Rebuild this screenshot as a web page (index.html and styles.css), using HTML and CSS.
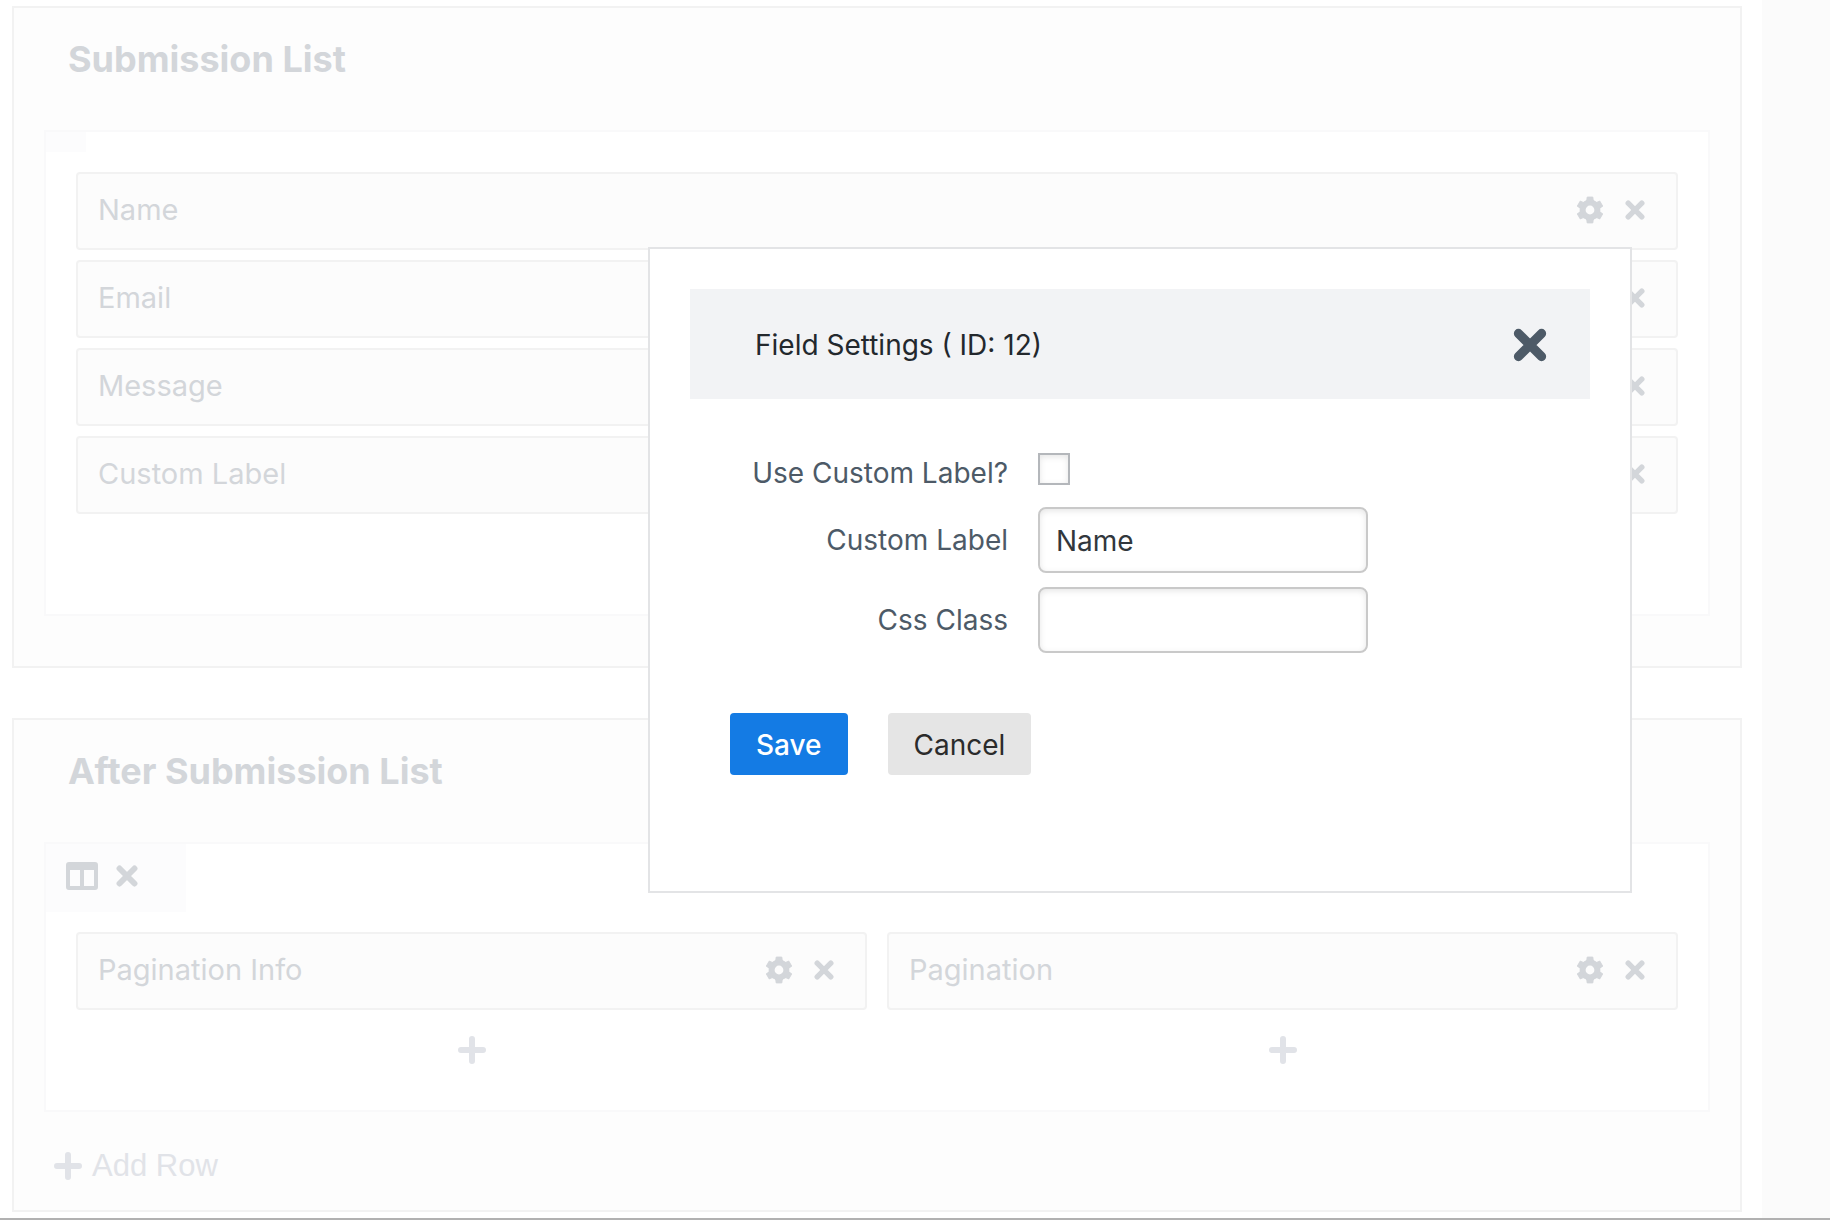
FILE: index.html
```html
<!DOCTYPE html>
<html lang="en">
<head>
    <meta charset="UTF-8">
    <meta name="viewport" content="width=device-width, initial-scale=1.0">
    <title>List Layout Builder</title>
    <link rel="stylesheet" href="styles.css">
</head>
<body>
    <!-- Shared icons -->
    <svg class="sprite" aria-hidden="true">
        <symbol id="icon-close" viewBox="0 0 20 20">
            <path d="M3.2 3.2 16.8 16.8M16.8 3.2 3.2 16.8" fill="none" stroke="currentColor" stroke-width="5.4" stroke-linecap="round"/>
        </symbol>
        <symbol id="icon-gear" viewBox="0 0 28 28">
            <circle cx="14" cy="14" r="7.4" fill="none" stroke="currentColor" stroke-width="6"/>
            <g fill="currentColor" stroke="currentColor" stroke-width="1" stroke-linejoin="round">
                <path id="tooth" d="M8.8 6.2 10.8 4.5 11.2 1.1H16.8L17.2 4.5 19.2 6.2Z"/>
                <use href="#tooth" transform="rotate(60 14 14)"/>
                <use href="#tooth" transform="rotate(120 14 14)"/>
                <use href="#tooth" transform="rotate(180 14 14)"/>
                <use href="#tooth" transform="rotate(240 14 14)"/>
                <use href="#tooth" transform="rotate(300 14 14)"/>
            </g>
        </symbol>
        <symbol id="icon-plus" viewBox="0 0 28 28">
            <path d="M14 3v22M3 14h22" fill="none" stroke="currentColor" stroke-width="6" stroke-linecap="round"/>
        </symbol>
        <symbol id="icon-columns" viewBox="0 0 32 28">
            <path fill="currentColor" fill-rule="evenodd" d="M3 0h26a3 3 0 0 1 3 3v22a3 3 0 0 1-3 3H3a3 3 0 0 1-3-3V3a3 3 0 0 1 3-3ZM4 8v16h10V8ZM18 8v16h10V8Z"/>
        </symbol>
    </svg>

    <div class="page">
        <main class="builder">
            <section class="panel">
                <h2>Submission List</h2>
                <div class="row">
                    <div class="row-handle"></div>
                    <div class="columns">
                        <div class="column">
                            <div class="field">
                                <span>Name</span>
                                <button type="button" aria-label="Settings"><svg class="gear"><use href="#icon-gear"/></svg></button>
                                <button type="button" aria-label="Remove"><svg class="remove"><use href="#icon-close"/></svg></button>
                            </div>
                            <div class="field">
                                <span>Email</span>
                                <button type="button" aria-label="Settings"><svg class="gear"><use href="#icon-gear"/></svg></button>
                                <button type="button" aria-label="Remove"><svg class="remove"><use href="#icon-close"/></svg></button>
                            </div>
                            <div class="field">
                                <span>Message</span>
                                <button type="button" aria-label="Settings"><svg class="gear"><use href="#icon-gear"/></svg></button>
                                <button type="button" aria-label="Remove"><svg class="remove"><use href="#icon-close"/></svg></button>
                            </div>
                            <div class="field">
                                <span>Custom Label</span>
                                <button type="button" aria-label="Settings"><svg class="gear"><use href="#icon-gear"/></svg></button>
                                <button type="button" aria-label="Remove"><svg class="remove"><use href="#icon-close"/></svg></button>
                            </div>
                            <button type="button" class="add-field" aria-label="Add field"><svg class="plus"><use href="#icon-plus"/></svg></button>
                        </div>
                    </div>
                </div>
            </section>

            <section class="panel">
                <h2>After Submission List</h2>
                <div class="row">
                    <div class="row-handle">
                        <div class="row-tools">
                            <button type="button" aria-label="Columns"><svg class="cols"><use href="#icon-columns"/></svg></button>
                            <button type="button" aria-label="Remove row"><svg class="remove-row"><use href="#icon-close"/></svg></button>
                        </div>
                    </div>
                    <div class="columns">
                        <div class="column">
                            <div class="field">
                                <span>Pagination Info</span>
                                <button type="button" aria-label="Settings"><svg class="gear"><use href="#icon-gear"/></svg></button>
                                <button type="button" aria-label="Remove"><svg class="remove"><use href="#icon-close"/></svg></button>
                            </div>
                            <button type="button" class="add-field" aria-label="Add field"><svg class="plus"><use href="#icon-plus"/></svg></button>
                        </div>
                        <div class="column">
                            <div class="field">
                                <span>Pagination</span>
                                <button type="button" aria-label="Settings"><svg class="gear"><use href="#icon-gear"/></svg></button>
                                <button type="button" aria-label="Remove"><svg class="remove"><use href="#icon-close"/></svg></button>
                            </div>
                            <button type="button" class="add-field" aria-label="Add field"><svg class="plus"><use href="#icon-plus"/></svg></button>
                        </div>
                    </div>
                </div>
                <button type="button" class="add-row"><svg class="plus"><use href="#icon-plus"/></svg>Add Row</button>
            </section>
        </main>
        <aside class="sidebar"></aside>
    </div>

    <div class="modal" role="dialog" aria-labelledby="modalTitle">
        <div class="modal-header">
            <h3 id="modalTitle">Field Settings ( ID: 12)</h3>
            <button type="button" aria-label="Close"><svg class="close"><use href="#icon-close"/></svg></button>
        </div>
        <form>
            <div class="form-row form-row-check">
                <label for="useCustomLabel">Use Custom Label?</label>
                <input type="checkbox" id="useCustomLabel">
            </div>
            <div class="form-row">
                <label for="customLabel">Custom Label</label>
                <input type="text" id="customLabel" value="Name">
            </div>
            <div class="form-row">
                <label for="cssClass">Css Class</label>
                <input type="text" id="cssClass">
            </div>
            <div class="form-actions">
                <button type="button" class="btn btn-primary">Save</button>
                <button type="button" class="btn">Cancel</button>
            </div>
        </form>
    </div>
</body>
</html>
```
FILE: styles.css
```css
* {
    box-sizing: border-box;
}

body {
    margin: 0;
    background: #fff;
    color: #d3d6da;
    font-family: Inter, "Liberation Sans", sans-serif;
    font-size: 28px;
}

h2, h3 {
    margin: 0;
}

button {
    background: none;
    border: none;
    padding: 0;
    color: inherit;
    font-family: inherit;
    font-size: inherit;
    cursor: pointer;
}

svg {
    display: block;
}

.sprite {
    position: absolute;
    width: 0;
    height: 0;
}

.gear, .plus {
    width: 28px;
    height: 28px;
}

.remove {
    width: 20px;
    height: 20px;
}

.remove-row {
    width: 22px;
    height: 22px;
}

.cols {
    width: 32px;
    height: 28px;
}

.close {
    width: 34px;
    height: 34px;
}

/* Builder */
.page {
    display: flex;
    border-bottom: 2px solid #b1b1b1;
}

.builder {
    flex: 1;
    display: flex;
    flex-direction: column;
    gap: 50px;
    padding: 6px 20px 6px 12px;
}

.sidebar {
    width: 68px;
    background: #fbfbfb;
}

.panel {
    background: #fdfdfd;
    border: 2px solid #f2f2f2;
    padding: 28px 30px 16px;
}

.panel h2 {
    margin-bottom: 48px;
    padding: 0 24px;
    font-size: 36px;
    line-height: 46px;
}

.row {
    margin-bottom: 34px;
    background: #fff;
    border: 2px solid #f9f9fa;
}

.row-handle {
    width: fit-content;
    padding: 10px 20px;
    background: #fcfcfd;
}

.row-tools {
    display: flex;
    align-items: center;
    gap: 18px;
    width: 100px;
    padding: 8px 0 12px;
}

.columns {
    display: flex;
    gap: 20px;
    padding: 20px 30px 30px;
}

.column {
    flex: 1;
    display: flex;
    flex-direction: column;
    gap: 10px;
}

.field {
    display: flex;
    align-items: center;
    gap: 21px;
    padding: 16px 31px 18px 20px;
    background: #fcfcfc;
    border: 2px solid #f2f2f2;
    border-radius: 4px;
    font-size: 29px;
    line-height: 40px;
}

.field span {
    flex: 1;
}

.add-field {
    display: flex;
    justify-content: center;
    padding: 16px;
    color: #e1e3e8;
}

.add-row {
    display: flex;
    align-items: center;
    gap: 10px;
    margin: 0 10px 8px;
    color: #e1e3e8;
    font-family: "Liberation Sans", sans-serif;
    font-size: 31px;
    line-height: 40px;
}

/* Field settings modal */
.modal {
    position: absolute;
    top: 247px;
    left: 648px;
    width: 984px;
    padding: 40px;
    background: #fff;
    border: 2px solid #e3e4e6;
}

.modal-header {
    display: flex;
    align-items: center;
    justify-content: space-between;
    padding: 36px 43px 34px 65px;
    background: #f2f3f5;
    color: #4d5a67;
}

.modal-header h3 {
    color: #23282d;
    font-size: 28px;
    font-weight: normal;
    line-height: 40px;
}

.modal form {
    display: flex;
    flex-direction: column;
    gap: 14px;
    padding: 54px 0 76px;
}

.form-row {
    display: flex;
    align-items: center;
    gap: 30px;
}

.form-row label {
    width: 318px;
    color: #4d5a67;
    line-height: 40px;
    text-align: right;
}

.form-row input {
    margin: 0;
    background: #fff;
    border: 2px solid #c9c9c9;
    box-shadow: inset 0 2px 6px rgba(0, 0, 0, 0.1);
    color: #32373c;
    font-family: inherit;
    font-size: 28px;
}

.form-row input[type="text"] {
    width: 330px;
    height: 66px;
    padding: 2px 16px 0;
    border-radius: 8px;
}

.form-row input[type="checkbox"] {
    appearance: none;
    width: 32px;
    height: 32px;
    border-color: #b4b7bb;
}

.form-row-check {
    align-items: flex-start;
}

.form-actions {
    display: flex;
    gap: 40px;
    margin-top: 46px;
    padding-left: 40px;
}

.btn {
    padding: 12px 26px 10px;
    background: #e5e5e5;
    border-radius: 4px;
    color: #2b2b2b;
    line-height: 40px;
}

.btn-primary {
    background: #147be4;
    color: #fff;
    font-weight: 500;
}
```
